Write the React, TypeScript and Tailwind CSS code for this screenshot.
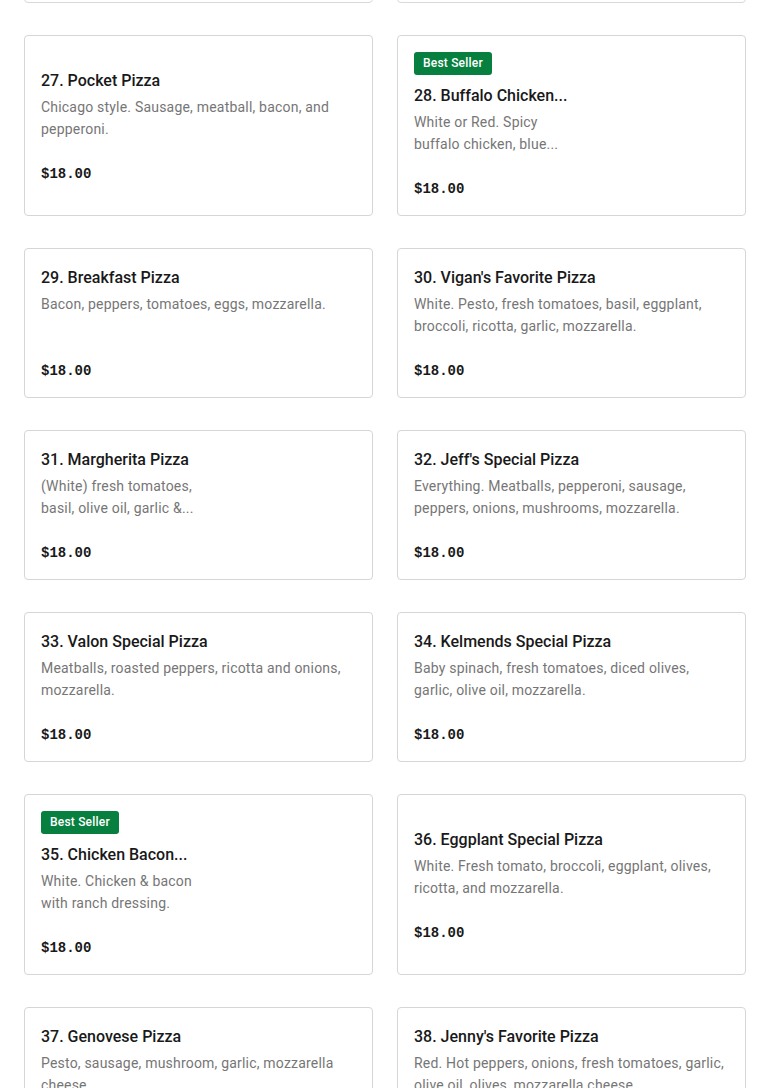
const items = [
  { title: "", desc: [""], top: true },
  { title: "", desc: [""], top: true },
  { title: "27. Pocket Pizza", desc: ["Chicago style. Sausage, meatball, bacon, and", "pepperoni."] },
  { title: "28. Buffalo Chicken...", desc: ["White or Red. Spicy", "buffalo chicken, blue..."], badge: true },
  { title: "29. Breakfast Pizza", desc: ["Bacon, peppers, tomatoes, eggs, mozzarella."] },
  { title: "30. Vigan's Favorite Pizza", desc: ["White. Pesto, fresh tomatoes, basil, eggplant,", "broccoli, ricotta, garlic, mozzarella."] },
  { title: "31. Margherita Pizza", desc: ["(White) fresh tomatoes,", "basil, olive oil, garlic &..."] },
  { title: "32. Jeff's Special Pizza", desc: ["Everything. Meatballs, pepperoni, sausage,", "peppers, onions, mushrooms, mozzarella."] },
  { title: "33. Valon Special Pizza", desc: ["Meatballs, roasted peppers, ricotta and onions,", "mozzarella."] },
  { title: "34. Kelmends Special Pizza", desc: ["Baby spinach, fresh tomatoes, diced olives,", "garlic, olive oil, mozzarella."] },
  { title: "35. Chicken Bacon...", desc: ["White. Chicken & bacon", "with ranch dressing."], badge: true },
  { title: "36. Eggplant Special Pizza", desc: ["White. Fresh tomato, broccoli, eggplant, olives,", "ricotta, and mozzarella."] },
  { title: "37. Genovese Pizza", desc: ["Pesto, sausage, mushroom, garlic, mozzarella", "cheese."] },
  { title: "38. Jenny's Favorite Pizza", desc: ["Red. Hot peppers, onions, fresh tomatoes, garlic,", "olive oil, olives, mozzarella cheese."] },
];

type Item = { title: string; desc: string[]; badge?: boolean; top?: boolean };

function Card({ item }: { item: Item }) {
  if (item.top) {
    return <div className="h-[150px] rounded-[4px] border border-[#d9d9d9] bg-white" />;
  }
  return (
    <div className="flex flex-col justify-center rounded-[4px] border border-[#d6d6d6] bg-white px-4 py-4">
      {item.badge && (
        <span className="mb-2 self-start rounded-[3px] bg-[#07803f] px-[9px] text-[12px] font-medium leading-[23px] tracking-[0.2px] text-white">
          Best Seller
        </span>
      )}
      <h3 className="pt-px text-[16px] font-medium leading-[23px] text-[#191919]">{item.title}</h3>
      <p className="mt-1 h-[44px] text-[14px] leading-[22px] tracking-[0.2px] text-[#767676]">
        {item.desc.map((line, i) => (
          <span key={i} className="block whitespace-nowrap">
            {line}
          </span>
        ))}
      </p>
      <div className="mt-6 font-['Liberation_Mono',monospace] text-[14px] font-bold leading-5 text-[#191919]">
        $18.00
      </div>
    </div>
  );
}

export default function App() {
  return (
    <div className="h-[1088px] overflow-hidden bg-white font-['Roboto',sans-serif]">
      <div className="-mt-[147px] grid grid-cols-2 gap-x-6 gap-y-8 px-6">
        {items.map((item, i) => (
          <Card key={i} item={item} />
        ))}
      </div>
    </div>
  );
}
